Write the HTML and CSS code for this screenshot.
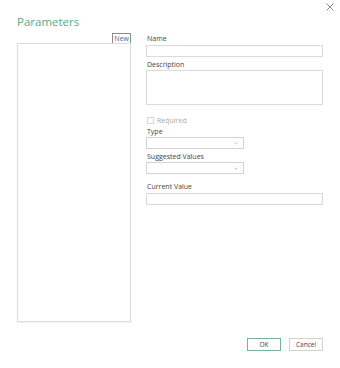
FILE: index.html
```html
<!DOCTYPE html>
<html lang="en">
<head>
  <meta charset="UTF-8">
  <title>Parameters</title>
  <link rel="stylesheet" href="styles.css">
</head>
<body>
  <div class="dialog">
    <button class="close" title="Close">
      <svg width="8" height="8" viewBox="0 0 8 8"><path d="M0.5 0.5 L7.5 7.5 M7.5 0.5 L0.5 7.5" stroke="#8a8a8a" stroke-width="1" fill="none"/></svg>
    </button>

    <div class="header">
      <h1>Parameters</h1>
    </div>

    <div class="main">
      <div class="left">
        <button class="btn-new">New</button>
        <div class="param-list"></div>
      </div>

      <div class="right">
        <label class="field-label">Name</label>
        <div class="input"></div>

        <label class="field-label label-desc">Description</label>
        <div class="textarea"></div>

        <div class="check-row">
          <span class="checkbox"></span>
          <span>Required</span>
        </div>

        <label class="field-label label-type">Type</label>
        <div class="select">
          <svg width="4" height="3" viewBox="0 0 4 3"><path d="M0.5 0.8 L2 2.2 L3.5 0.8" stroke="#aaa" stroke-width="0.7" fill="none"/></svg>
        </div>

        <label class="field-label label-suggested">Suggested Values</label>
        <div class="select">
          <svg width="4" height="3" viewBox="0 0 4 3"><path d="M0.5 0.8 L2 2.2 L3.5 0.8" stroke="#aaa" stroke-width="0.7" fill="none"/></svg>
        </div>

        <label class="field-label label-current">Current Value</label>
        <div class="input"></div>
      </div>
    </div>

    <div class="footer">
      <button class="btn btn-ok">OK</button>
      <button class="btn">Cancel</button>
    </div>
  </div>
</body>
</html>
```

FILE: styles.css
```css
body {
  margin: 0;
  background-color: #fff;
  font-family: "Open Sans", "Noto Sans", sans-serif;
  color: #333;
}

.dialog {
  position: relative;
  width: 340px;
  height: 368px;
  padding: 0 16px 0 17px;
  box-sizing: border-box;
}

.close {
  position: absolute;
  top: 3px;
  right: 6px;
  width: 8px;
  height: 8px;
  padding: 0;
  border: none;
  background: none;
  display: flex;
}

.header {
  height: 33px;
}

h1 {
  margin: 0;
  padding-top: 14px;
  font-size: 11.5px;
  line-height: 16px;
  font-weight: 400;
  color: #62a585;
}

.main {
  display: flex;
  gap: 15px;
}

.left {
  width: 114px;
  display: flex;
  flex-direction: column;
  align-items: flex-end;
}

.btn-new {
  height: 10px;
  padding: 0 1px;
  border: 1px solid #8a8a8a;
  border-bottom: none;
  background: #fff;
  font-family: inherit;
  font-size: 7px;
  line-height: 8px;
  color: #3b6aa8;
}

.param-list {
  width: 114px;
  height: 279px;
  box-sizing: border-box;
  border: 1px solid #dcdcdc;
  box-shadow: 0 1px 1px rgba(0, 0, 0, 0.06);
}

.right {
  width: 177px;
  display: flex;
  flex-direction: column;
  padding-top: 1px;
}

.field-label {
  display: block;
  font-size: 7px;
  line-height: 10px;
  padding-left: 1px;
  color: #444;
}

.input {
  margin-top: 1px;
  height: 12px;
  border: 1px solid #dadada;
  box-sizing: border-box;
}

.label-desc {
  margin-top: 3px;
}

.textarea {
  height: 35px;
  border: 1px solid #dadada;
  box-sizing: border-box;
}

.check-row {
  display: flex;
  align-items: center;
  gap: 3px;
  margin-top: 10px;
  height: 10px;
  padding-left: 1px;
  font-size: 7px;
  color: #a8a8a8;
}

.checkbox {
  width: 7px;
  height: 7px;
  border: 1px solid #d6d6d6;
  box-sizing: border-box;
}

.label-type {
  margin-top: 2px;
}

.select {
  width: 98px;
  height: 12px;
  border: 1px solid #d2d2d2;
  box-sizing: border-box;
  display: flex;
  align-items: center;
  justify-content: flex-end;
  padding-right: 5px;
}

.label-suggested {
  margin-top: 3px;
}

.label-current {
  margin-top: 8px;
}

.footer {
  display: flex;
  justify-content: flex-end;
  gap: 8px;
  margin-top: 16px;
  padding-right: 1px;
}

.btn {
  width: 34px;
  height: 13px;
  padding: 0;
  background: #fff;
  border: 1px solid #d2d2d2;
  font-family: inherit;
  font-size: 6.5px;
  line-height: 11px;
  color: #444;
}

.btn-ok {
  border-color: #78b596;
}
```
